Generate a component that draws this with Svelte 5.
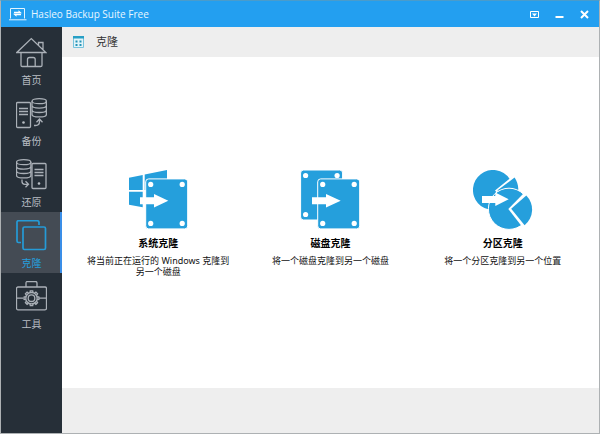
<script>
  const items = [
    { id: 'home', label: '首页' },
    { id: 'backup', label: '备份' },
    { id: 'restore', label: '还原' },
    { id: 'clone', label: '克隆' },
    { id: 'tools', label: '工具' }
  ];
  const cards = [
    { id: 'system', title: '系统克隆', text: '将当前正在运行的 Windows 克隆到另一个磁盘' },
    { id: 'disk', title: '磁盘克隆', text: '将一个磁盘克隆到另一个磁盘' },
    { id: 'partition', title: '分区克隆', text: '将一个分区克隆到另一个位置' }
  ];
  const teeth = [0, 45, 90, 135, 180, 225, 270, 315];
  let active = $state('clone');
</script>

{#snippet database(x)}
  <g transform="translate({x} 0)">
    <ellipse cx="7.7" cy="3.2" rx="7.2" ry="2.5" />
    <path d="M.5 3.2v13.2c0 1.4 3.2 2.5 7.2 2.5s7.2-1.1 7.2-2.5V3.2M.5 7.6c0 1.4 3.2 2.5 7.2 2.5s7.2-1.1 7.2-2.5M.5 12c0 1.4 3.2 2.5 7.2 2.5s7.2-1.1 7.2-2.5" />
  </g>
{/snippet}

{#snippet server(x)}
  <g transform="translate({x} 0)">
    <rect class="case" x=".5" y="4.5" width="14" height="25" rx="1" />
    <path d="M3 10.5h9M3 13.5h9M3 16.5h9" />
    <circle class="dot" cx="7.5" cy="24.5" r="1.3" />
  </g>
{/snippet}

{#snippet drive(x, y)}
  <g transform="translate({x} {y})">
    <rect class="edge" x="0" y="0" width="42" height="50" rx="3" />
    <g class="white">
      <circle cx="5" cy="5.5" r="2.6" /><circle cx="36.5" cy="5.5" r="2.6" />
      <circle cx="5" cy="44.5" r="2.6" /><circle cx="36.5" cy="44.5" r="2.6" />
    </g>
  </g>
{/snippet}

<div class="window">
  <header class="titlebar">
    <svg class="logo" width="18" height="13" viewBox="0 0 18 13" aria-hidden="true">
      <path d="M1.5 10.5V.5h14v10M0 11.8h17.5" fill="none" stroke="#e3f4ff" />
      <path d="M5 3.8h4.5V2.2L13 5.2H5zM12 7.2H7.5v1.6L4 5.8h8z" fill="#fff" />
    </svg>
    <h1>Hasleo Backup Suite Free</h1>
    <div class="controls">
      <button aria-label="菜单">
        <svg width="9" height="9" viewBox="0 0 9 9"><path d="M.5 1.5h8v6h-8z" fill="none" stroke="#fff" /><path d="M2 3.5h5L4.5 6.5z" fill="#fff" /></svg>
      </button>
      <button aria-label="最小化">
        <svg width="9" height="9" viewBox="0 0 9 9"><path d="M.5 7h8" stroke="#fff" stroke-width="2" /></svg>
      </button>
      <button aria-label="关闭">
        <svg width="9" height="9" viewBox="0 0 9 9"><path d="M1 1l7 7M8 1L1 8" stroke="#fff" stroke-width="2" /></svg>
      </button>
    </div>
  </header>

  <div class="body">
    <nav>
      {#each items as item (item.id)}
        <button class:active={active === item.id} onclick={() => (active = item.id)}>
          <svg class="nav-icon" width="31" height="32" viewBox="0 0 31 32" aria-hidden="true">
            {#if item.id === 'home'}
              <path d="M5 15.5H.8L15.3 1.6 29.8 15.5H26M5 15.5v12.7q0 1.3 1.3 1.3h18.4q1.3 0 1.3-1.3V15.5M5 15.5h21M11.5 29.5v-7q0-2 2-2h3.7q2 0 2 2v7M22.5 8.3V5.5h4.5v7.2" />
            {:else if item.id === 'backup'}
              {@render database(15.5)}
              {@render server(0)}
              <path d="M18 27.5h1.5q4 0 4-4v-2M20.5 24.2l3-3.2 3 3.2" />
            {:else if item.id === 'restore'}
              {@render database(0)}
              {@render server(15.5)}
              <path d="M6 20.5v2q0 2.8 2.8 2.8h3.4M9.5 22.3l3 3-3 3" />
            {:else if item.id === 'clone'}
              <g class="thick">
                <path d="M5 22.5H2.5Q1 22.5 1 21V2Q1 .7 2.5.7H21q2 0 2 1.8V5" />
                <rect x="7" y="7" width="22.5" height="22.5" rx="1.5" />
              </g>
            {:else}
              <rect x=".5" y="6" width="30" height="22.8" rx="1.5" />
              <path d="M10 6V2q0-1.5 1.5-1.5h8Q21 .5 21 2v4M.5 17.2h7M23 17.2h7.5" />
              {#each teeth as angle}
                <path d="M14 11.6l.3-1.8h2.4l.3 1.8" transform="rotate({angle} 15.5 17.2)" />
              {/each}
              <circle cx="15.5" cy="17.2" r="5.7" />
              <circle cx="15.5" cy="17.2" r="3.3" />
            {/if}
          </svg>
          <span>{item.label}</span>
        </button>
      {/each}
    </nav>

    <div class="content">
      <div class="heading">
        <svg width="11" height="12" viewBox="0 0 11 12" aria-hidden="true">
          <path d="M.5.5h10v11H.5z" fill="#e3f4f9" stroke="#79c3dc" />
          <path d="M0 0h11v2.5H0z" fill="#279fc5" />
          <path d="M2.5 4.5h2v2h-2zM6.5 4.5h2v2h-2zM2.5 8h2v2h-2zM6.5 8h2v2h-2z" fill="#2593b8" />
        </svg>
        <h2>克隆</h2>
      </div>

      <main>
        {#each cards as card (card.id)}
          <button class="card">
            <svg class="art" width="60" height="60" viewBox="0 0 60 60" aria-hidden="true">
              {#if card.id === 'system'}
                <path d="M1 7.7L14.7 5v15H1zM1 21.7h13.7v15.6L1 34.7zM16.7 4.6L39 0v20H16.7z" />
                {@render drive(17.7, 8.9)}
                <path class="white" d="M12 27.3h14V24l14.3 6.8L26 37.5v-3.2H12z" />
              {:else if card.id === 'disk'}
                {@render drive(0.6, 0)}
                {@render drive(17.7, 8.9)}
                <path class="white" d="M12 27.3h14V24l14.7 6.8L26 37.5v-3.2H12z" />
              {:else}
                <path d="M22 20.5L36.5 8.7A20 20 0 1 0 34.1 34.1z" />
                <path d="M24.3 20.6L41.6 7.5Q45 12.5 45.3 19L44 26z" />
                <circle class="edge" cx="36" cy="38.8" r="20.6" />
                <path class="white" d="M35.3 39L50 24l10 0v32l-10.7 1z" />
                <path d="M38.2 38.8L53.3 25.5A20 20 0 0 1 51.6 55.2z" />
                <path class="white" d="M9 26h13.3v-3.4l13.4 6.7-13.4 6.8v-3H9z" />
              {/if}
            </svg>
            <strong>{card.title}</strong>
            <span>{card.text}</span>
          </button>
        {/each}
      </main>
      <footer></footer>
    </div>
  </div>
</div>

<style>
  :global(body) {
    margin: 0;
  }
  .window {
    box-sizing: border-box;
    display: flex;
    flex-direction: column;
    min-height: 100vh;
    border: 1px solid #adb1b3;
    border-top-color: #4a9ccb;
    background: #fff;
    font-family: "Noto Sans", "Noto Sans CJK SC", sans-serif;
  }
  button {
    margin: 0;
    padding: 0;
    border: 0;
    background: none;
    font: inherit;
    cursor: pointer;
  }
  svg {
    display: block;
    flex: none;
  }
  h1,
  h2 {
    margin: 0;
    font-weight: 400;
  }
  .titlebar {
    display: flex;
    align-items: center;
    height: 26px;
    padding: 0 10px 0 8px;
    background: #239ff0;
    color: #e8f6ff;
  }
  h1 {
    margin-left: 4px;
    font-family: "Open Sans", "Noto Sans", sans-serif;
    font-size: 10px;
    line-height: 16px;
  }
  .controls {
    display: flex;
    gap: 16px;
    margin-left: auto;
  }
  .body {
    display: flex;
    flex: 1;
  }
  nav {
    display: flex;
    flex: none;
    flex-direction: column;
    width: 61px;
    padding-top: 2px;
    background: #262f38;
  }
  nav button {
    display: flex;
    flex-direction: column;
    align-items: center;
    gap: 4px;
    padding: 8px 0 3px;
    color: #b9bec4;
    font-size: 10px;
    line-height: 14px;
  }
  nav button.active {
    background: #444b54;
    box-shadow: inset -2px 0 #3a8ee8;
    color: #259fdd;
  }
  .nav-icon {
    fill: none;
    stroke: #aab0b7;
    stroke-width: 1.3;
  }
  .active .nav-icon {
    stroke: #259bd7;
  }
  .thick {
    stroke-width: 1.7;
  }
  .nav-icon .case {
    fill: #262f38;
  }
  .nav-icon .dot {
    fill: #b9bec4;
    stroke: none;
  }
  .content {
    display: flex;
    flex: 1;
    flex-direction: column;
    min-width: 0;
  }
  .heading {
    display: flex;
    align-items: center;
    gap: 12px;
    height: 30px;
    padding: 0 11px;
    background: #eee;
  }
  h2 {
    color: #333;
    font-size: 11px;
    line-height: 16px;
  }
  main {
    display: grid;
    flex: 1;
    grid-template-columns: repeat(3, 1fr);
    align-items: start;
    padding: 113px 10px 16px;
  }
  .card {
    display: flex;
    flex-direction: column;
    align-items: center;
    padding: 0 12px;
    color: #111;
    font-size: 9px;
    line-height: 11px;
    text-align: center;
  }
  .card strong {
    margin: 5px 0 4px;
    color: #000;
    font-size: 10px;
    line-height: 16px;
  }
  .art {
    fill: #259fdc;
  }
  .edge {
    stroke: #fff;
    stroke-width: 1;
  }
  .white {
    fill: #fff;
  }
  footer {
    height: 45px;
    background: #eee;
  }
</style>
